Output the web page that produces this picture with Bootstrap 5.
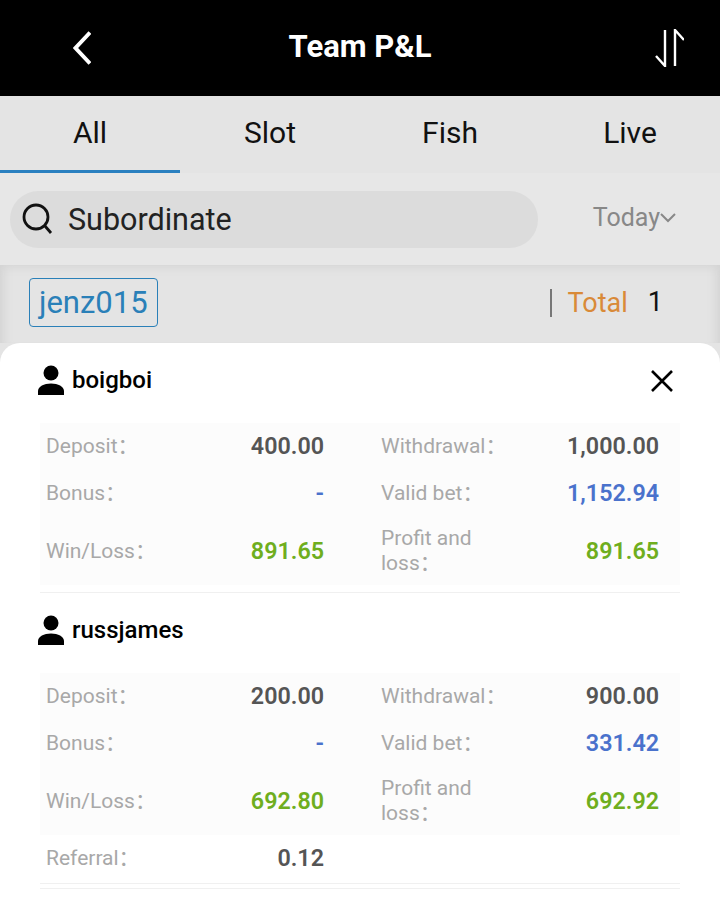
<!DOCTYPE html>
<html lang="en">

<head>
  <meta charset="UTF-8">
  <title>Team P&amp;L</title>
  <meta name="viewport" content="width=device-width, initial-scale=1">
  <link href="https://cdn.jsdelivr.net/npm/bootstrap@5.3.2/dist/css/bootstrap.min.css" rel="stylesheet">
  <style>
    html, body {
      height: 100%;
      overflow: hidden;
    }

    body {
      background-color: #e4e4e4;
      font-family: Roboto, "Noto Sans CJK SC", sans-serif;
      color: #111;
    }

    .top-bar {
      height: 96px;
      background: #000;
      color: #fff;
      padding: 0 36px;
    }

    .top-side {
      width: 55px;
    }

    .top-side.back {
      padding-left: 37px;
    }

    .top-title {
      font-size: 31px;
      font-weight: 700;
      padding-bottom: 2px;
    }

    .tab-bar {
      height: 77px;
    }

    .tab-item {
      width: 180px;
      font-size: 30px;
      padding-bottom: 2px;
      border-bottom: 3px solid transparent;
    }

    .tab-item.active {
      border-bottom-color: #2a80c0;
    }

    .filter-row {
      height: 92px;
      padding: 0 44px 0 10px;
      background: #e7e7e7;
    }

    .search-pill {
      width: 528px;
      height: 57px;
      background: #dcdcdc;
      border-radius: 29px;
      padding-left: 11px;
      font-size: 30.5px;
      color: #222;
    }

    .search-text {
      margin-left: 15px;
      padding-top: 1px;
    }

    .today-pick {
      font-size: 25px;
      color: #888;
      padding-bottom: 2px;
    }

    .team-band {
      height: 78px;
      padding: 0 57px 3px 29px;
      box-shadow: inset 0 8px 10px -6px #d4d4d4, inset 12px 0 10px -8px #d4d4d4, inset -12px 0 10px -8px #d4d4d4;
    }

    .team-chip {
      height: 49px;
      padding: 2px 9px 0;
      border: 1px solid #2a80b8;
      border-radius: 4px;
      font-size: 31px;
      color: #2a80b8;
    }

    .team-total {
      font-size: 27px;
    }

    .total-label {
      border-left: 2px solid #777;
      line-height: 28px;
      padding-left: 16px;
      margin-right: 20px;
      color: #d98a38;
    }

    .sheet {
      background: #fff;
      border-radius: 20px 20px 0 0;
      padding: 0 40px;
      height: 560px;
    }

    .person-head {
      height: 80px;
      padding: 0 6px 6px 0;
      margin-left: -2px;
      font-size: 24px;
      font-weight: 500;
      color: #000;
    }

    .close-x {
      margin-top: 2px;
    }

    .stat-grid {
      display: grid;
      grid-template-columns: 1fr 1fr;
      column-gap: 57px;
      padding: 0 21px 0 6px;
      background: #fcfcfc;
    }

    .stat-grid.plain {
      background: #fff;
    }

    .stat-cell {
      min-height: 47px;
    }

    .stat-cell.tall {
      min-height: 68px;
    }

    .stat-label {
      max-width: 130px;
      font-size: 21px;
      line-height: 25px;
      color: #a8a8a8;
    }

    .stat-value {
      font-size: 23.3px;
      font-weight: 600;
      color: #555;
    }

    .val-blue {
      color: #4a72cc;
    }

    .val-green {
      color: #6fae1e;
    }

    .block-rule {
      height: 8px;
      border-bottom: 1px solid #f0f0f0;
    }

    .block-rule.tight {
      height: 2px;
    }

    .block-rule.tail {
      height: 5px;
    }
  </style>
</head>

<body>
  <div class="top-bar d-flex align-items-center justify-content-between">
    <div class="top-side back">
      <svg class="d-block" width="18" height="34" viewBox="0 0 18 34" fill="none" stroke="#fff" stroke-width="4">
        <path d="M17 1.5 2.500 17 17 32.500" />
      </svg>
    </div>
    <div class="top-title">Team P&amp;L</div>
    <div class="top-side d-flex justify-content-end">
      <svg width="30" height="38" viewBox="0 0 30 38" fill="none" stroke="#fff" stroke-width="2.4">
        <path d="M11 1v36L2 27M21 37V1l9 10" />
      </svg>
    </div>
  </div>

  <div class="tab-bar d-flex">
    <div class="tab-item active d-flex align-items-center justify-content-center">All</div>
    <div class="tab-item d-flex align-items-center justify-content-center">Slot</div>
    <div class="tab-item d-flex align-items-center justify-content-center">Fish</div>
    <div class="tab-item d-flex align-items-center justify-content-center">Live</div>
  </div>

  <div class="filter-row d-flex align-items-center justify-content-between">
    <div class="search-pill d-flex align-items-center">
      <svg width="32" height="32" viewBox="0 0 32 32" fill="none" stroke="#111" stroke-width="2.8">
        <circle cx="15" cy="14" r="12" />
        <path d="M24 23l6 7" />
      </svg>
      <span class="search-text">Subordinate</span>
    </div>
    <div class="today-pick d-flex align-items-center">
      <span>Today</span>
      <svg width="16" height="10" viewBox="0 0 16 10" fill="none" stroke="#888" stroke-width="2">
        <path d="M1 1l7 7 7-7" />
      </svg>
    </div>
  </div>

  <div class="team-band d-flex align-items-center justify-content-between">
    <div class="team-chip d-flex align-items-center">jenz015</div>
    <div class="team-total d-flex align-items-center">
      <span class="total-label">Total</span>
      <span>1</span>
    </div>
  </div>

  <div class="sheet" id="sheet"></div>

  <script>
    const closeIcon = `<svg class="close-x" width="24" height="24" viewBox="0 0 24 24" fill="none" stroke="#000" stroke-width="2.6"><path d="M2 2l20 20M22 2 2 22" /></svg>`;
    const personIcon = `<svg width="26" height="30" viewBox="0 0 26 30" fill="#000"><circle cx="13" cy="8" r="7.5" /><path d="M0 30v-4c0-4.500 6-7.500 13-7.500s13 3 13 7.500v4z" /></svg>`;

    const people = [
      {
        name: 'boigboi', close: true,
        rows: [
          ['Deposit', '400.00', '', 'Withdrawal', '1,000.00', ''],
          ['Bonus', '-', 'val-blue', 'Valid bet', '1,152.94', 'val-blue'],
          ['Win/Loss', '891.65', 'val-green', 'Profit and loss', '891.65', 'val-green']
        ],
        extra: []
      },
      {
        name: 'russjames', close: false,
        rows: [
          ['Deposit', '200.00', '', 'Withdrawal', '900.00', ''],
          ['Bonus', '-', 'val-blue', 'Valid bet', '331.42', 'val-blue'],
          ['Win/Loss', '692.80', 'val-green', 'Profit and loss', '692.92', 'val-green']
        ],
        extra: [['Referral', '0.12', '']]
      }
    ];

    function renderCell(label, value, cls, tall) {
      return `
        <div class="stat-cell d-flex align-items-center justify-content-between ${tall ? 'tall' : ''}">
          <span class="stat-label">${label}：</span>
          <span class="stat-value ${cls}">${value}</span>
        </div>`;
    }

    function renderRows(rows) {
      return rows.map(r => {
        const tall = r[0] === 'Win/Loss';
        let html = renderCell(r[0], r[1], r[2], tall);
        if (r.length > 3) html += renderCell(r[3], r[4], r[5], tall);
        return html;
      }).join('');
    }

    document.getElementById('sheet').innerHTML = people.map(p => `
      <div class="person-head d-flex align-items-center justify-content-between">
        <div class="d-flex align-items-center gap-2">${personIcon}<span>${p.name}</span></div>
        ${p.close ? closeIcon : ''}
      </div>
      <div class="stat-grid">${renderRows(p.rows)}</div>
      ${p.extra.length
        ? `<div class="stat-grid plain">${renderRows(p.extra)}</div><div class="block-rule tight"></div><div class="block-rule tail"></div>`
        : '<div class="block-rule"></div>'}`).join('');
  </script>
</body>

</html>
